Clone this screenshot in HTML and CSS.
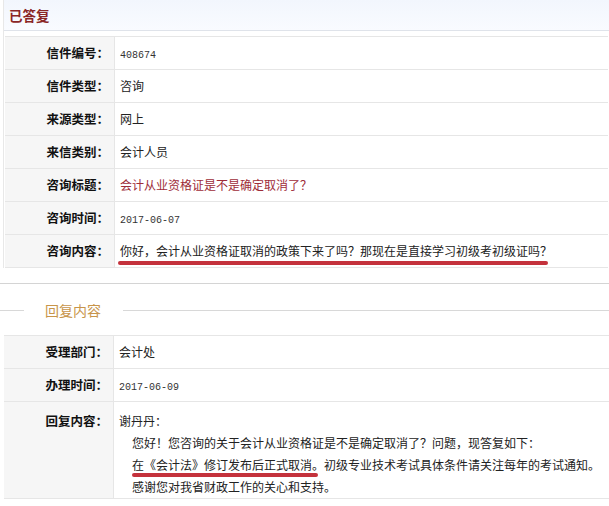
FILE: index.html
```html
<!DOCTYPE html>
<html lang="zh-CN">
<head>
    <meta charset="UTF-8">
    <meta name="viewport" content="width=device-width, initial-scale=1.0">
    <title>已答复</title>
    <link rel="stylesheet" href="styles.css">
</head>
<body>
    <div class="box">
        <div class="box-hd">已答复</div>
        <table class="info">
            <tr>
                <th>信件编号：</th>
                <td><span class="num">408674</span></td>
            </tr>
            <tr>
                <th>信件类型：</th>
                <td>咨询</td>
            </tr>
            <tr>
                <th>来源类型：</th>
                <td>网上</td>
            </tr>
            <tr>
                <th>来信类别：</th>
                <td>会计人员</td>
            </tr>
            <tr>
                <th>咨询标题：</th>
                <td class="title">会计从业资格证是不是确定取消了？</td>
            </tr>
            <tr>
                <th>咨询时间：</th>
                <td><span class="num">2017-06-07</span></td>
            </tr>
            <tr>
                <th>咨询内容：</th>
                <td><span class="mark mark-a">你好，会计从业资格证取消的政策下来了吗？那现在是直接学习初级考初级证吗？</span></td>
            </tr>
        </table>
    </div>

    <div class="reply">
        <div class="reply-hd"><span>回复内容</span></div>
        <table class="info">
            <tr>
                <th>受理部门：</th>
                <td>会计处</td>
            </tr>
            <tr>
                <th>办理时间：</th>
                <td><span class="num">2017-06-09</span></td>
            </tr>
            <tr class="tall">
                <th>回复内容：</th>
                <td>
                    <p>谢丹丹：</p>
                    <div class="answer">
                        <p>您好！您咨询的关于会计从业资格证是不是确定取消了？问题，现答复如下：</p>
                        <p><span class="mark mark-b">在《会计法》修订发布后正式取消</span>。初级专业技术考试具体条件请关注每年的考试通知。</p>
                        <p>感谢您对我省财政工作的关心和支持。</p>
                    </div>
                </td>
            </tr>
        </table>
    </div>
</body>
</html>
```

FILE: styles.css
```css
body {
    font-family: "Noto Sans CJK SC", sans-serif;
    font-size: 12px;
    color: #222;
    margin: 0;
    padding: 0;
    background-color: #fff;
}
p {
    margin: 0;
}
.box {
    margin-left: 3px;
    border-left: 1px solid #e8e8e8;
}
.box-hd {
    height: 30px;
    line-height: 30px;
    padding-left: 5px;
    font-size: 13.5px;
    font-weight: bold;
    color: #8a2626;
    background: linear-gradient(#f2f6fd, #f9fbff);
    border-bottom: 1px solid #dfe3ea;
}
.info {
    width: calc(100% - 2px);
    margin: 5px 0 0 1px;
    border-collapse: collapse;
}
.info tr {
    height: 33px;
}
.info th,
.info td {
    line-height: 20px;
    padding: 0;
    border: 1px solid #e6e6e6;
    border-left: none;
    border-right: none;
    vertical-align: middle;
}
.info th {
    width: 104px;
    padding-right: 5px;
    text-align: right;
    font-size: 12.5px;
    font-weight: bold;
    color: #111;
    background: #f6f6f6;
    border-right: 1px solid #e6e6e6;
}
.info td {
    padding-left: 5px;
    text-align: left;
}
.num {
    font-family: "Liberation Mono", monospace;
    font-size: 10px;
    line-height: 1;
    color: #333;
}
.title {
    color: #9e2c38;
}
.mark {
    position: relative;
}
.mark::after {
    content: "";
    position: absolute;
    height: 4px;
    border-radius: 2px;
    background: #c4323c;
}
.mark-a::after {
    left: -2px;
    right: 4px;
    bottom: -6px;
}
.mark-b::after {
    left: 0;
    right: -6px;
    bottom: -4px;
}
.reply {
    margin-top: 15px;
    border-top: 1px solid #d4d4d4;
}
.reply .info {
    margin-top: 0;
    margin-left: 4px;
    width: calc(100% - 4px);
}
.reply-hd {
    display: flex;
    align-items: center;
    height: 51px;
    padding-top: 1px;
    box-sizing: border-box;
}
.reply-hd::before,
.reply-hd::after {
    content: "";
    height: 1px;
    background: #d8d8d8;
}
.reply-hd::before {
    width: 24px;
}
.reply-hd::after {
    flex: 1;
}
.reply-hd span {
    padding: 0 22px 0 21px;
    font-size: 14px;
    color: #c8954a;
}
.info tr.tall {
    height: auto;
}
.tall th,
.tall td {
    line-height: 22px;
    padding-top: 8px;
    padding-bottom: 0;
    vertical-align: top;
}
.answer {
    padding-left: 13px;
}
```
